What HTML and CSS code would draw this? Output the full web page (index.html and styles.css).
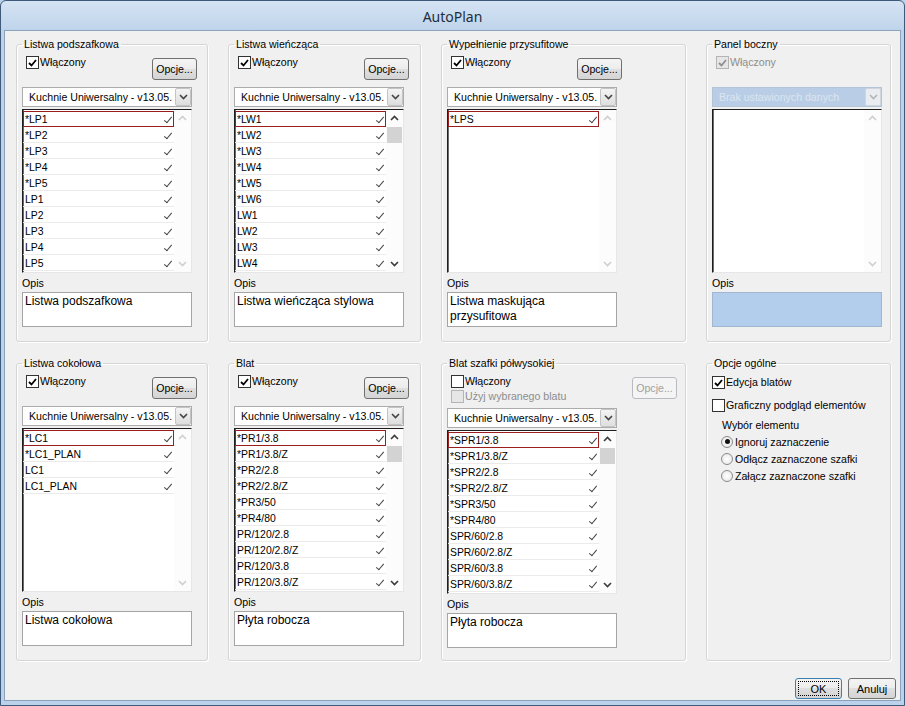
FILE: index.html
```html
<!DOCTYPE html>
<html lang="pl">
<head>
<meta charset="utf-8">
<title>AutoPlan</title>
<link rel="stylesheet" href="styles.css">
</head>
<body>
<div class="window">
  <div class="titlebar">AutoPlan</div>
  <div class="client">
    <div class="groups">

      <fieldset class="grp">
        <legend>Listwa podszafkowa</legend>
        <div class="toprow">
          <label class="chk"><span class="box"><svg width="9" height="8" viewBox="0 0 9 8"><path d="M1 4 L3.5 6.5 L8 1" fill="none" stroke="#000" stroke-width="1.8"/></svg></span>Włączony</label>
          <span class="btn">Opcje...</span>
        </div>
        <div class="combo"><span class="ctext">Kuchnie Uniwersalny - v13.05.</span><span class="cdrop"><svg width="9" height="6" viewBox="0 0 9 6"><polyline points="1,1 4.5,4.5 8,1" fill="none" stroke="#444" stroke-width="1.6"/></svg></span></div>
        <div class="listbox">
          <div class="items">
            <div class="item focus">*LP1</div>
            <div class="item">*LP2</div>
            <div class="item">*LP3</div>
            <div class="item">*LP4</div>
            <div class="item">*LP5</div>
            <div class="item">LP1</div>
            <div class="item">LP2</div>
            <div class="item">LP3</div>
            <div class="item">LP4</div>
            <div class="item">LP5</div>
          </div>
          <div class="sb off">
            <span class="sb-btn"><svg width="9" height="6" viewBox="0 0 9 6"><polyline points="1,5 4.5,1.5 8,5" fill="none" stroke-width="1.6"/></svg></span>
            <span class="sb-track"></span>
            <span class="sb-btn"><svg width="9" height="6" viewBox="0 0 9 6"><polyline points="1,1 4.5,4.5 8,1" fill="none" stroke-width="1.6"/></svg></span>
          </div>
        </div>
        <div class="opis-label">Opis</div>
        <div class="opis">Listwa podszafkowa</div>
      </fieldset>

      <fieldset class="grp">
        <legend>Listwa wieńcząca</legend>
        <div class="toprow">
          <label class="chk"><span class="box"><svg width="9" height="8" viewBox="0 0 9 8"><path d="M1 4 L3.5 6.5 L8 1" fill="none" stroke="#000" stroke-width="1.8"/></svg></span>Włączony</label>
          <span class="btn">Opcje...</span>
        </div>
        <div class="combo"><span class="ctext">Kuchnie Uniwersalny - v13.05.</span><span class="cdrop"><svg width="9" height="6" viewBox="0 0 9 6"><polyline points="1,1 4.5,4.5 8,1" fill="none" stroke="#444" stroke-width="1.6"/></svg></span></div>
        <div class="listbox">
          <div class="items">
            <div class="item focus">*LW1</div>
            <div class="item">*LW2</div>
            <div class="item">*LW3</div>
            <div class="item">*LW4</div>
            <div class="item">*LW5</div>
            <div class="item">*LW6</div>
            <div class="item">LW1</div>
            <div class="item">LW2</div>
            <div class="item">LW3</div>
            <div class="item">LW4</div>
          </div>
          <div class="sb">
            <span class="sb-btn"><svg width="9" height="6" viewBox="0 0 9 6"><polyline points="1,5 4.5,1.5 8,5" fill="none" stroke-width="1.6"/></svg></span>
            <span class="sb-track"><span class="sb-thumb"></span></span>
            <span class="sb-btn"><svg width="9" height="6" viewBox="0 0 9 6"><polyline points="1,1 4.5,4.5 8,1" fill="none" stroke-width="1.6"/></svg></span>
          </div>
        </div>
        <div class="opis-label">Opis</div>
        <div class="opis">Listwa wieńcząca stylowa</div>
      </fieldset>

      <fieldset class="grp">
        <legend>Wypełnienie przysufitowe</legend>
        <div class="toprow">
          <label class="chk"><span class="box"><svg width="9" height="8" viewBox="0 0 9 8"><path d="M1 4 L3.5 6.5 L8 1" fill="none" stroke="#000" stroke-width="1.8"/></svg></span>Włączony</label>
          <span class="btn">Opcje...</span>
        </div>
        <div class="combo"><span class="ctext">Kuchnie Uniwersalny - v13.05.</span><span class="cdrop"><svg width="9" height="6" viewBox="0 0 9 6"><polyline points="1,1 4.5,4.5 8,1" fill="none" stroke="#444" stroke-width="1.6"/></svg></span></div>
        <div class="listbox">
          <div class="items">
            <div class="item focus">*LPS</div>
          </div>
          <div class="sb off">
            <span class="sb-btn"><svg width="9" height="6" viewBox="0 0 9 6"><polyline points="1,5 4.5,1.5 8,5" fill="none" stroke-width="1.6"/></svg></span>
            <span class="sb-track"></span>
            <span class="sb-btn"><svg width="9" height="6" viewBox="0 0 9 6"><polyline points="1,1 4.5,4.5 8,1" fill="none" stroke-width="1.6"/></svg></span>
          </div>
        </div>
        <div class="opis-label">Opis</div>
        <div class="opis">Listwa maskująca<br>przysufitowa</div>
      </fieldset>

      <fieldset class="grp">
        <legend>Panel boczny</legend>
        <div class="toprow">
          <label class="chk dis"><span class="box"><svg width="9" height="8" viewBox="0 0 9 8"><path d="M1 4 L3.5 6.5 L8 1" fill="none" stroke="#8e8e8e" stroke-width="1.8"/></svg></span>Włączony</label>
        </div>
        <div class="combo blue"><span class="ctext">Brak ustawionych danych</span><span class="cdrop"><svg width="9" height="6" viewBox="0 0 9 6"><polyline points="1,1 4.5,4.5 8,1" fill="none" stroke="#b4b4b4" stroke-width="1.6"/></svg></span></div>
        <div class="listbox">
          <div class="items"></div>
          <div class="sb off">
            <span class="sb-btn"><svg width="9" height="6" viewBox="0 0 9 6"><polyline points="1,5 4.5,1.5 8,5" fill="none" stroke-width="1.6"/></svg></span>
            <span class="sb-track"></span>
            <span class="sb-btn"><svg width="9" height="6" viewBox="0 0 9 6"><polyline points="1,1 4.5,4.5 8,1" fill="none" stroke-width="1.6"/></svg></span>
          </div>
        </div>
        <div class="opis-label">Opis</div>
        <div class="opis blue"></div>
      </fieldset>

      <fieldset class="grp">
        <legend>Listwa cokołowa</legend>
        <div class="toprow">
          <label class="chk"><span class="box"><svg width="9" height="8" viewBox="0 0 9 8"><path d="M1 4 L3.5 6.5 L8 1" fill="none" stroke="#000" stroke-width="1.8"/></svg></span>Włączony</label>
          <span class="btn">Opcje...</span>
        </div>
        <div class="combo"><span class="ctext">Kuchnie Uniwersalny - v13.05.</span><span class="cdrop"><svg width="9" height="6" viewBox="0 0 9 6"><polyline points="1,1 4.5,4.5 8,1" fill="none" stroke="#444" stroke-width="1.6"/></svg></span></div>
        <div class="listbox">
          <div class="items">
            <div class="item focus">*LC1</div>
            <div class="item">*LC1_PLAN</div>
            <div class="item">LC1</div>
            <div class="item">LC1_PLAN</div>
          </div>
          <div class="sb off">
            <span class="sb-btn"><svg width="9" height="6" viewBox="0 0 9 6"><polyline points="1,5 4.5,1.5 8,5" fill="none" stroke-width="1.6"/></svg></span>
            <span class="sb-track"></span>
            <span class="sb-btn"><svg width="9" height="6" viewBox="0 0 9 6"><polyline points="1,1 4.5,4.5 8,1" fill="none" stroke-width="1.6"/></svg></span>
          </div>
        </div>
        <div class="opis-label">Opis</div>
        <div class="opis">Listwa cokołowa</div>
      </fieldset>

      <fieldset class="grp">
        <legend>Blat</legend>
        <div class="toprow">
          <label class="chk"><span class="box"><svg width="9" height="8" viewBox="0 0 9 8"><path d="M1 4 L3.5 6.5 L8 1" fill="none" stroke="#000" stroke-width="1.8"/></svg></span>Włączony</label>
          <span class="btn">Opcje...</span>
        </div>
        <div class="combo"><span class="ctext">Kuchnie Uniwersalny - v13.05.</span><span class="cdrop"><svg width="9" height="6" viewBox="0 0 9 6"><polyline points="1,1 4.5,4.5 8,1" fill="none" stroke="#444" stroke-width="1.6"/></svg></span></div>
        <div class="listbox">
          <div class="items">
            <div class="item focus">*PR1/3.8</div>
            <div class="item">*PR1/3.8/Z</div>
            <div class="item">*PR2/2.8</div>
            <div class="item">*PR2/2.8/Z</div>
            <div class="item">*PR3/50</div>
            <div class="item">*PR4/80</div>
            <div class="item">PR/120/2.8</div>
            <div class="item">PR/120/2.8/Z</div>
            <div class="item">PR/120/3.8</div>
            <div class="item">PR/120/3.8/Z</div>
          </div>
          <div class="sb">
            <span class="sb-btn"><svg width="9" height="6" viewBox="0 0 9 6"><polyline points="1,5 4.5,1.5 8,5" fill="none" stroke-width="1.6"/></svg></span>
            <span class="sb-track"><span class="sb-thumb"></span></span>
            <span class="sb-btn"><svg width="9" height="6" viewBox="0 0 9 6"><polyline points="1,1 4.5,4.5 8,1" fill="none" stroke-width="1.6"/></svg></span>
          </div>
        </div>
        <div class="opis-label">Opis</div>
        <div class="opis">Płyta robocza</div>
      </fieldset>

      <fieldset class="grp">
        <legend>Blat szafki półwysokiej</legend>
        <div class="toprow tall wide">
          <div class="chkcol">
            <label class="chk"><span class="box"></span>Włączony</label>
            <label class="chk dis"><span class="box"></span>Użyj wybranego blatu</label>
          </div>
          <span class="btn dis">Opcje...</span>
        </div>
        <div class="combo"><span class="ctext">Kuchnie Uniwersalny - v13.05.</span><span class="cdrop"><svg width="9" height="6" viewBox="0 0 9 6"><polyline points="1,1 4.5,4.5 8,1" fill="none" stroke="#444" stroke-width="1.6"/></svg></span></div>
        <div class="listbox">
          <div class="items">
            <div class="item focus">*SPR1/3.8</div>
            <div class="item">*SPR1/3.8/Z</div>
            <div class="item">*SPR2/2.8</div>
            <div class="item">*SPR2/2.8/Z</div>
            <div class="item">*SPR3/50</div>
            <div class="item">*SPR4/80</div>
            <div class="item">SPR/60/2.8</div>
            <div class="item">SPR/60/2.8/Z</div>
            <div class="item">SPR/60/3.8</div>
            <div class="item">SPR/60/3.8/Z</div>
          </div>
          <div class="sb">
            <span class="sb-btn"><svg width="9" height="6" viewBox="0 0 9 6"><polyline points="1,5 4.5,1.5 8,5" fill="none" stroke-width="1.6"/></svg></span>
            <span class="sb-track"><span class="sb-thumb"></span></span>
            <span class="sb-btn"><svg width="9" height="6" viewBox="0 0 9 6"><polyline points="1,1 4.5,4.5 8,1" fill="none" stroke-width="1.6"/></svg></span>
          </div>
        </div>
        <div class="opis-label">Opis</div>
        <div class="opis">Płyta robocza</div>
      </fieldset>

      <fieldset class="grp opt">
        <legend>Opcje ogólne</legend>
        <label class="chk"><span class="box"><svg width="9" height="8" viewBox="0 0 9 8"><path d="M1 4 L3.5 6.5 L8 1" fill="none" stroke="#000" stroke-width="1.8"/></svg></span>Edycja blatów</label>
        <label class="chk"><span class="box"></span>Graficzny podgląd elementów</label>
        <div class="wybor">Wybór elementu</div>
        <label class="rad"><span class="circle on"></span>Ignoruj zaznaczenie</label>
        <label class="rad"><span class="circle"></span>Odłącz zaznaczone szafki</label>
        <label class="rad"><span class="circle"></span>Załącz zaznaczone szafki</label>
      </fieldset>

    </div>
    <div class="actions">
      <span class="dbtn default"><span class="ring">OK</span></span>
      <span class="dbtn">Anuluj</span>
    </div>
  </div>
</div>
</body>
</html>
```

FILE: styles.css
```css
* { box-sizing: border-box; }
html, body { margin: 0; padding: 0; }
body {
  width: 905px;
  height: 706px;
  overflow: hidden;
  background: #bcd2ea;
  font-family: "Liberation Sans", Arial, sans-serif;
  font-size: 10.6px;
  color: #000;
}

.window {
  width: 905px;
  height: 706px;
  display: flex;
  flex-direction: column;
  border: 1px solid #3f5a78;
  border-radius: 6px 6px 0 0;
  background: linear-gradient(#d5e4f4, #bed3ea 30px, #bcd2ea);
  padding: 0 3px 4px 3px;
}

.titlebar {
  height: 29px;
  flex: none;
  display: flex;
  align-items: center;
  justify-content: center;
  font-family: "Noto Sans", sans-serif;
  font-size: 14px;
  color: #1e2d3d;
  padding-top: 1px;
}

.client {
  flex: 1;
  background: #f0f0f0;
  border: 1px solid #8ba2bd;
  padding: 7px 4px 0 11px;
  display: flex;
  flex-direction: column;
}

.groups {
  display: grid;
  grid-template-columns: 192px 193px 245px 185px;
  grid-template-rows: 304px 304px;
  column-gap: 20px;
  row-gap: 15px;
}

.grp {
  margin: 0;
  padding: 3px 0 0 5px;
  border: 1px solid #d5d5d5;
  border-radius: 3px;
  box-shadow: inset 1px 1px 0 #fff, 1px 1px 0 #fff;
  min-width: 0;
}
.grp legend {
  padding: 0 2px;
  line-height: 13px;
}

.toprow {
  display: flex;
  align-items: flex-start;
  width: 175px;
  height: 26px;
}
.toprow.tall { height: 28px; }
.toprow.wide { width: auto; margin-right: 8px; }

.chkcol {
  display: flex;
  flex-direction: column;
  gap: 2px;
  margin: 2px 0 0 4px;
}
.chkcol .chk { margin: 0; }

.chk {
  display: flex;
  align-items: center;
  height: 13px;
  line-height: 13px;
  margin: 2px 0 0 4px;
  white-space: nowrap;
}
.box {
  width: 13px;
  height: 13px;
  flex: none;
  border: 1px solid #333;
  background: #fff;
  margin-right: 1px;
  display: flex;
  align-items: center;
  justify-content: center;
}
.chk.dis { color: #8d8d8d; }
.chk.dis .box { border-color: #b4b4b4; background: #e6e6e6; }

.btn {
  margin: 4px 0 0 auto;
  width: 45px;
  height: 22px;
  border: 1px solid #707070;
  border-radius: 3px;
  background: linear-gradient(#f4f4f4, #ececec 50%, #dfdfdf 50%, #d4d4d4);
  display: flex;
  align-items: center;
  justify-content: center;
}
.btn.dis {
  color: #a0a0a0;
  border-color: #b8bcc0;
  background: #f4f4f4;
}

.combo {
  margin-top: 7px;
  width: 170px;
  height: 20px;
  border: 1px solid #acacac;
  background: #fff;
  display: flex;
  align-items: center;
}
.ctext {
  flex: 1;
  min-width: 0;
  padding-left: 6px;
  white-space: nowrap;
  overflow: hidden;
}
.cdrop {
  flex: none;
  width: 16px;
  height: 18px;
  border: 1px solid #c4c4c4;
  border-radius: 2px;
  background: linear-gradient(#f4f4f4, #dedede);
  display: flex;
  align-items: center;
  justify-content: center;
}
.combo.blue {
  background: #b9cee6;
  border-color: #b3c5d9;
}
.combo.blue .ctext { color: #dbe5f0; }
.combo.blue .cdrop { background: #e9edf1; border-color: #d0d6dc; }

.listbox {
  margin-top: 2px;
  width: 170px;
  height: 164px;
  display: flex;
  border-style: solid;
  border-width: 1px;
  border-color: #1e1e1e #e6e6e6 #e6e6e6 #1e1e1e;
  box-shadow: inset 1px 0 0 #6a6a6a;
  background: #fff;
}
.items {
  flex: 1;
  min-width: 0;
  padding-top: 1px;
}
.item {
  height: 16px;
  display: flex;
  align-items: center;
  justify-content: space-between;
  padding: 2px 4px 0 2px;
  border-bottom: 1px solid #ebebeb;
  font-size: 10.4px;
  white-space: nowrap;
}
.item::after {
  content: "";
  width: 3px;
  height: 7px;
  border: solid #444;
  border-width: 0 1px 1px 0;
  transform: rotate(40deg);
  margin-top: -2px;
}
.item.focus {
  border: 1px solid #9b1d1d;
  padding: 1px 3px 0 1px;
}

.sb {
  width: 17px;
  flex: none;
  display: flex;
  flex-direction: column;
  background: #fcfcfc;
}
.sb-btn {
  height: 16px;
  display: flex;
  align-items: center;
  justify-content: center;
}
.sb-btn svg { stroke: #3a3a3a; }
.sb.off .sb-btn svg { stroke: #cfcfcf; }
.sb-track { flex: 1; }
.sb-thumb {
  display: block;
  margin: 1px 1px 0 1px;
  height: 16px;
  background: #d3d3d3;
}

.opis-label {
  margin-top: 3px;
  line-height: 14px;
}
.opis {
  margin-top: 2px;
  width: 170px;
  height: 35px;
  border: 1px solid #a5a5a5;
  background: #fff;
  font-size: 12px;
  line-height: 15px;
  padding: 1px 2px;
}
.opis.blue { background: #b3cdec; border-color: #a2b7cf; }

.opt .chk { margin: 3px 0 0 0; }
.opt .chk + .chk { margin-top: 10px; }
.wybor {
  margin: 7px 0 0 10px;
  line-height: 13px;
}
.rad {
  display: flex;
  align-items: center;
  height: 13px;
  margin: 3px 0 0 9px;
}
.rad + .rad { margin-top: 4px; }
.circle {
  width: 12px;
  height: 12px;
  flex: none;
  border-radius: 50%;
  border: 1px solid #8a8a8a;
  background: radial-gradient(#ffffff, #e4e4e4);
  margin-right: 2px;
  display: flex;
  align-items: center;
  justify-content: center;
}
.circle.on::after {
  content: "";
  width: 5px;
  height: 5px;
  border-radius: 50%;
  background: #111;
}

.actions {
  display: flex;
  justify-content: flex-end;
  gap: 6px;
  margin-top: 17px;
}
.dbtn {
  width: 48px;
  height: 21px;
  border: 1px solid #707070;
  border-radius: 3px;
  background: linear-gradient(#f4f4f4, #ececec 50%, #dfdfdf 50%, #d4d4d4);
  display: flex;
  align-items: center;
  justify-content: center;
  font-size: 11px;
}
.dbtn.default {
  width: 47px;
  border-color: #3c7fb1;
  padding: 2px;
}
.ring {
  flex: 1;
  align-self: stretch;
  display: flex;
  align-items: center;
  justify-content: center;
  border: 1px dotted #000;
}
```
